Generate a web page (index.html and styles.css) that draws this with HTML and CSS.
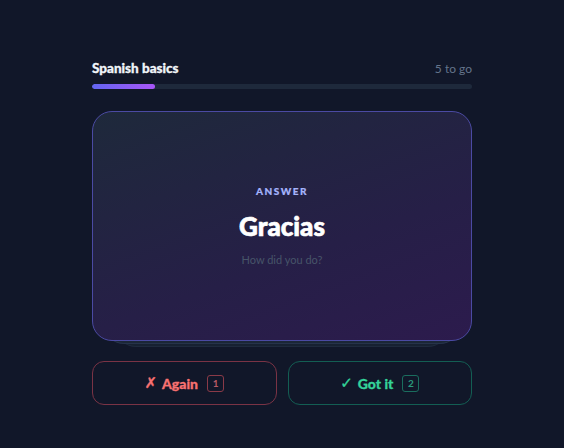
FILE: index.html
```html
<!DOCTYPE html>
<html>
<head>
<meta charset="utf-8">
<link rel="stylesheet" href="styles.css">
</head>
<body>
<main class="deck">
  <header class="head">
    <span class="title">Spanish basics</span>
    <span class="left">5 to go</span>
  </header>
  <div class="track"><div class="fill" style="width:16.5%"></div></div>
  <section class="stack">
    <div class="card">
      <div class="label">ANSWER</div>
      <div class="word">Gracias</div>
      <div class="hint">How did you do?</div>
    </div>
    <div class="layer l1"></div>
    <div class="layer l2"></div>
  </section>
  <div class="actions">
    <button class="btn again"><span class="ico">✗</span> Again <span class="key">1</span></button>
    <button class="btn got"><span class="ico">✓</span> Got it <span class="key">2</span></button>
  </div>
</main>
</body>
</html>
```

FILE: styles.css
```css
* { box-sizing: border-box; }
html, body { margin: 0; padding: 0; }
body {
  background: #111729;
  font-family: Lato, "Open Sans", sans-serif;
  height: 448px;
  overflow: hidden;
}
.deck {
  width: 380px;
  margin: 0 auto;
  padding-top: 60px;
}
.head {
  display: flex;
  justify-content: space-between;
  align-items: baseline;
  height: 18px;
}
.title {
  color: #f1f5f9;
  font-weight: 900;
  font-size: 13.5px;
  -webkit-text-stroke: 0.3px #f1f5f9;
}
.left {
  color: #64748b;
  font-size: 12px;
}
.track {
  margin-top: 6px;
  height: 5px;
  border-radius: 3px;
  background: #1e293b;
  overflow: hidden;
}
.fill {
  height: 100%;
  border-radius: 3px;
  background: linear-gradient(90deg, #6366f1, #a855f7);
}
.stack {
  position: relative;
  margin-top: 22px;
  height: 236px;
}
.card {
  position: relative;
  z-index: 3;
  height: 230px;
  border-radius: 20px;
  border: 1px solid #4b4aa3;
  background: linear-gradient(160deg, #1e293b 0%, #261f47 60%, #2c1b4d 100%);
  display: flex;
  flex-direction: column;
  align-items: center;
  justify-content: center;
}
.layer {
  position: absolute;
  left: 0;
  right: 0;
  height: 230px;
  top: 0;
  border-radius: 20px;
}
.l1 {
  z-index: 2;
  top: 3px;
  margin: 0 12px;
  background: #1b2636;
  border-bottom: 1px solid #26334a;
}
.l2 {
  z-index: 1;
  top: 6px;
  margin: 0 24px;
  background: #172131;
  border-bottom: 1px solid #1f2a3d;
}
.label {
  color: #a5b4fc;
  font-size: 10px;
  font-weight: 900;
  letter-spacing: 1.5px;
  line-height: 12px;
  -webkit-text-stroke: 0.2px #a5b4fc;
}
.word {
  margin-top: 14px;
  color: #ffffff;
  font-size: 26px;
  font-weight: 900;
  line-height: 30px;
  -webkit-text-stroke: 0.7px #ffffff;
}
.hint {
  margin-top: 12px;
  color: #475569;
  font-size: 11px;
  line-height: 14px;
}
.actions {
  margin-top: 14px;
  display: grid;
  grid-template-columns: 1fr 1fr;
  gap: 11px;
}
.btn {
  height: 44px;
  border-radius: 12px;
  background: transparent;
  font-family: Lato, "Open Sans", sans-serif;
  font-size: 14px;
  font-weight: 900;
  display: flex;
  align-items: center;
  justify-content: center;
  gap: 5px;
  cursor: pointer;
  -webkit-text-stroke: 0.3px currentColor;
}
.again {
  border: 1px solid #7a3345;
  color: #f87171;
}
.got {
  border: 1px solid #135e53;
  color: #34d399;
}
.ico { font-family: "DejaVu Sans", sans-serif; font-weight: 700; font-size: 15px; }
.key {
  margin-left: 4px;
  font-size: 10px;
  font-weight: 700;
  min-width: 17px;
  height: 17px;
  line-height: 15px;
  border-radius: 3px;
  text-align: center;
  -webkit-text-stroke: 0;
}
.again .key { border: 1px solid #8a3a48; color: #b85a66; }
.got .key { border: 1px solid #1a6d5e; color: #2b9b7d; }
```
